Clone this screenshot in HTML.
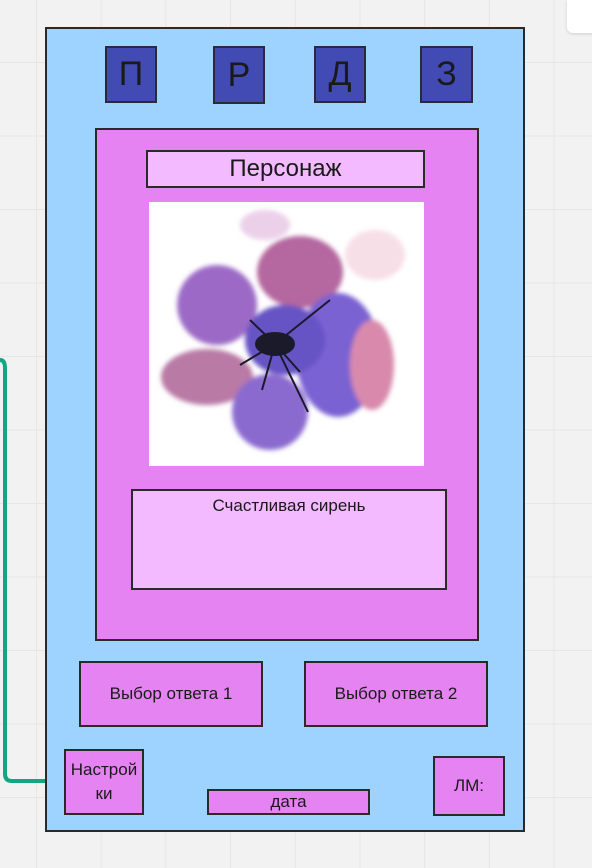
<!DOCTYPE html>
<html><head><meta charset="utf-8"><style>
body{margin:0;width:592px;height:868px;overflow:hidden;background:#f2f2f2;font-family:"Liberation Sans","DejaVu Sans",sans-serif;position:relative}
.a{position:absolute;box-sizing:border-box}
.grid{position:absolute;inset:0;background-image:linear-gradient(90deg,#e6e6e6 1px,transparent 1px),linear-gradient(#e6e6e6 1px,transparent 1px);background-size:64.7px 73.5px;background-position:36px 62px}
.k{border:2px solid #2a2a2a;display:flex;align-items:center;justify-content:center;color:#1a1a1a;text-align:center}
.t{background:#424bb3;font-size:34px;border-color:#2a2a3a}
.p{background:#e683f3}
</style></head><body>
<div class="grid"></div>
<div class="a" style="left:567px;top:0;width:30px;height:33px;background:#fff;border-radius:0 0 0 6px;box-shadow:0 1px 3px rgba(0,0,0,.15)"></div>
<svg class="a" style="left:0;top:0" width="70" height="868"><path d="M0 360 Q5 360 5 368 L5 774 Q5 781 12 781 L64 781" fill="none" stroke="#12a683" stroke-width="4"/></svg>
<div class="a" style="left:45px;top:27px;width:480px;height:805px;background:#9dd3fe;border:2px solid #2a2a2a"></div>
<div class="a k t" style="left:105px;top:46px;width:52px;height:57px">П</div>
<div class="a k t" style="left:213px;top:46px;width:52px;height:58px">Р</div>
<div class="a k t" style="left:314px;top:46px;width:52px;height:57px">Д</div>
<div class="a k t" style="left:420px;top:46px;width:53px;height:57px">З</div>
<div class="a p" style="left:95px;top:128px;width:384px;height:513px;border:2px solid #2a2a2a"></div>
<div class="a k" style="left:146px;top:150px;width:279px;height:38px;background:#f3baff;font-size:24px">Персонаж</div>
<div class="a" style="left:149px;top:202px;width:275px;height:264px;background:#fff"></div>
<svg class="a" style="left:149px;top:202px" width="275" height="264" viewBox="149 202 275 264">
<defs><filter id="b"><feGaussianBlur stdDeviation="2.5"/></filter></defs>
<g filter="url(#b)">
<ellipse cx="265" cy="225" rx="25" ry="15" fill="#ecd0ea"/>
<ellipse cx="375" cy="255" rx="30" ry="25" fill="#f7dfe7"/>
<ellipse cx="217" cy="305" rx="40" ry="40" fill="#9c6ac6"/>
<ellipse cx="300" cy="272" rx="43" ry="36" fill="#b4679f"/>
<ellipse cx="338" cy="355" rx="42" ry="62" fill="#7a62d3"/>
<ellipse cx="372" cy="365" rx="22" ry="45" fill="#d98aac"/>
<ellipse cx="207" cy="377" rx="46" ry="28" fill="#b97aa6"/>
<ellipse cx="270" cy="412" rx="38" ry="38" fill="#8a6bcf"/>
<ellipse cx="285" cy="340" rx="40" ry="35" fill="#6652c4"/>
</g>
<ellipse cx="275" cy="344" rx="20" ry="12" fill="#1a1a2a"/>
<g stroke="#1a1a2a" stroke-width="2"><path d="M275 344 L250 320 M275 344L240 365 M275 344 L308 412 M275 344 L330 300 M275 344 L300 372 M275 344 L262 390"/></g>
</svg>
<div class="a" style="left:131px;top:489px;width:316px;height:101px;background:#f3baff;border:2px solid #2a2a2a;text-align:center;font-size:17px;padding-top:5px;color:#1a1a1a">Счастливая сирень</div>
<div class="a k p" style="left:79px;top:661px;width:184px;height:66px;font-size:17px">Выбор ответа 1</div>
<div class="a k p" style="left:304px;top:661px;width:184px;height:66px;font-size:17px">Выбор ответа 2</div>
<div class="a k p" style="left:64px;top:749px;width:80px;height:66px;font-size:17px;line-height:24px">Настрой<br>ки</div>
<div class="a k p" style="left:207px;top:789px;width:163px;height:26px;font-size:17px">дата</div>
<div class="a k p" style="left:433px;top:756px;width:72px;height:60px;font-size:17px">ЛМ:</div>
</body></html>
